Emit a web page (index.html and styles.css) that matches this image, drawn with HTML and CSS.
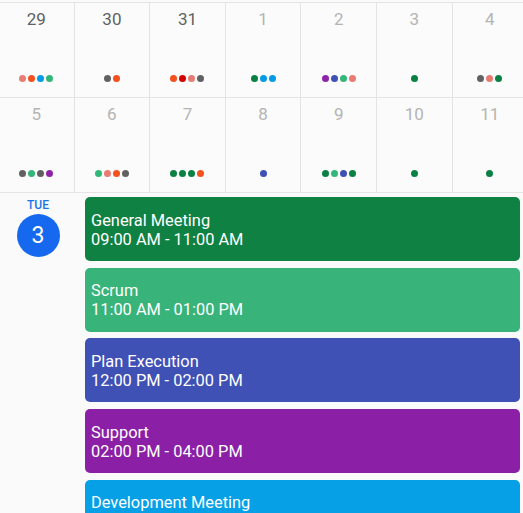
FILE: index.html
```html
<!DOCTYPE html>
<html>
<head>
<meta charset="utf-8">
<link rel="stylesheet" href="styles.css">
</head>
<body>
<div class="month">
  <div class="cell past"><span class="num">29</span><span class="dots"><i class="flamingo"></i><i class="tangerine"></i><i class="peacock"></i><i class="sage"></i></span></div>
  <div class="cell past"><span class="num">30</span><span class="dots"><i class="graphite"></i><i class="tangerine"></i></span></div>
  <div class="cell past"><span class="num">31</span><span class="dots"><i class="tangerine"></i><i class="tomato"></i><i class="flamingo"></i><i class="graphite"></i></span></div>
  <div class="cell"><span class="num">1</span><span class="dots"><i class="basil"></i><i class="peacock"></i><i class="peacock"></i></span></div>
  <div class="cell"><span class="num">2</span><span class="dots"><i class="grape"></i><i class="blueberry"></i><i class="sage"></i><i class="flamingo"></i></span></div>
  <div class="cell"><span class="num">3</span><span class="dots"><i class="basil"></i></span></div>
  <div class="cell"><span class="num">4</span><span class="dots"><i class="graphite"></i><i class="flamingo"></i><i class="basil"></i></span></div>
  <div class="cell"><span class="num">5</span><span class="dots"><i class="graphite"></i><i class="sage"></i><i class="graphite"></i><i class="grape"></i></span></div>
  <div class="cell"><span class="num">6</span><span class="dots"><i class="sage"></i><i class="flamingo"></i><i class="tangerine"></i><i class="graphite"></i></span></div>
  <div class="cell"><span class="num">7</span><span class="dots"><i class="basil"></i><i class="basil"></i><i class="basil"></i><i class="tangerine"></i></span></div>
  <div class="cell"><span class="num">8</span><span class="dots"><i class="blueberry"></i></span></div>
  <div class="cell"><span class="num">9</span><span class="dots"><i class="basil"></i><i class="sage"></i><i class="blueberry"></i><i class="basil"></i></span></div>
  <div class="cell"><span class="num">10</span><span class="dots"><i class="basil"></i></span></div>
  <div class="cell"><span class="num">11</span><span class="dots"><i class="basil"></i></span></div>
</div>
<div class="day">
  <div class="day-label">
    <span class="dow">TUE</span>
    <span class="date">3</span>
  </div>
  <div class="events">
    <div class="event ev-basil"><span class="title">General Meeting</span><span class="time">09:00 AM - 11:00 AM</span></div>
    <div class="event ev-sage"><span class="title">Scrum</span><span class="time">11:00 AM - 01:00 PM</span></div>
    <div class="event ev-blueberry"><span class="title">Plan Execution</span><span class="time">12:00 PM - 02:00 PM</span></div>
    <div class="event ev-grape"><span class="title">Support</span><span class="time">02:00 PM - 04:00 PM</span></div>
    <div class="event ev-peacock"><span class="title">Development Meeting</span><span class="time">04:00 PM - 06:00 PM</span></div>
  </div>
</div>
</body>
</html>
```
FILE: styles.css
```css
html, body {
  margin: 0;
  padding: 0;
  background: #fafafa;
  font-family: Roboto, "Noto Sans", sans-serif;
  overflow: hidden;
  height: 513px;
}

.month {
  margin-top: 2px;
  margin-left: -1px;
  width: 530px;
  display: grid;
  grid-template-columns: repeat(7, 75.6px);
  border-top: 1px solid #e4e4e4;
}

.cell {
  box-sizing: border-box;
  height: 95px;
  border-right: 1px solid #e4e4e4;
  border-bottom: 1px solid #e4e4e4;
  display: flex;
  flex-direction: column;
  align-items: center;
  justify-content: space-between;
  padding: 6px 0 15px;
  background: #fbfbfb;
}

.num {
  font-size: 17px;
  line-height: 20px;
  color: #b4b4b4;
}

.past .num {
  color: #616161;
}

.dots {
  display: flex;
  gap: 2px;
}

.dots i {
  display: block;
  width: 7px;
  height: 7px;
  border-radius: 50%;
}

.tomato { background: #d50000; }
.flamingo { background: #e67c73; }
.tangerine { background: #f4511e; }
.sage { background: #33b679; }
.basil { background: #0b8043; }
.peacock { background: #039be5; }
.blueberry { background: #3f51b5; }
.grape { background: #8e24aa; }
.graphite { background: #616161; }

.day {
  display: flex;
  padding: 4px 3px 0 0;
}

.day-label {
  width: 76px;
  flex: none;
  margin-right: 9px;
  display: flex;
  flex-direction: column;
  align-items: center;
  padding-top: 1px;
}

.dow {
  font-size: 12px;
  line-height: 14px;
  font-weight: 500;
  color: #1a73e8;
}

.date {
  margin-top: 2px;
  width: 43px;
  height: 43px;
  border-radius: 50%;
  background: #1669ef;
  color: #fff;
  font-size: 23px;
  line-height: 43px;
  text-align: center;
}

.events {
  flex: 1;
  display: flex;
  flex-direction: column;
  gap: 6.7px;
}

.event {
  box-sizing: border-box;
  height: 64px;
  flex: none;
  border-radius: 5px;
  padding: 1px 6px 0;
  display: flex;
  flex-direction: column;
  justify-content: center;
  color: #fff;
  font-size: 16.4px;
  line-height: 19px;
}

.ev-basil { background: #0f8143; }
.ev-sage { background: #38b379; }
.ev-blueberry { background: #3f51b5; }
.ev-grape { background: #8b20a7; }
.ev-peacock { background: #05a0e6; }
```
